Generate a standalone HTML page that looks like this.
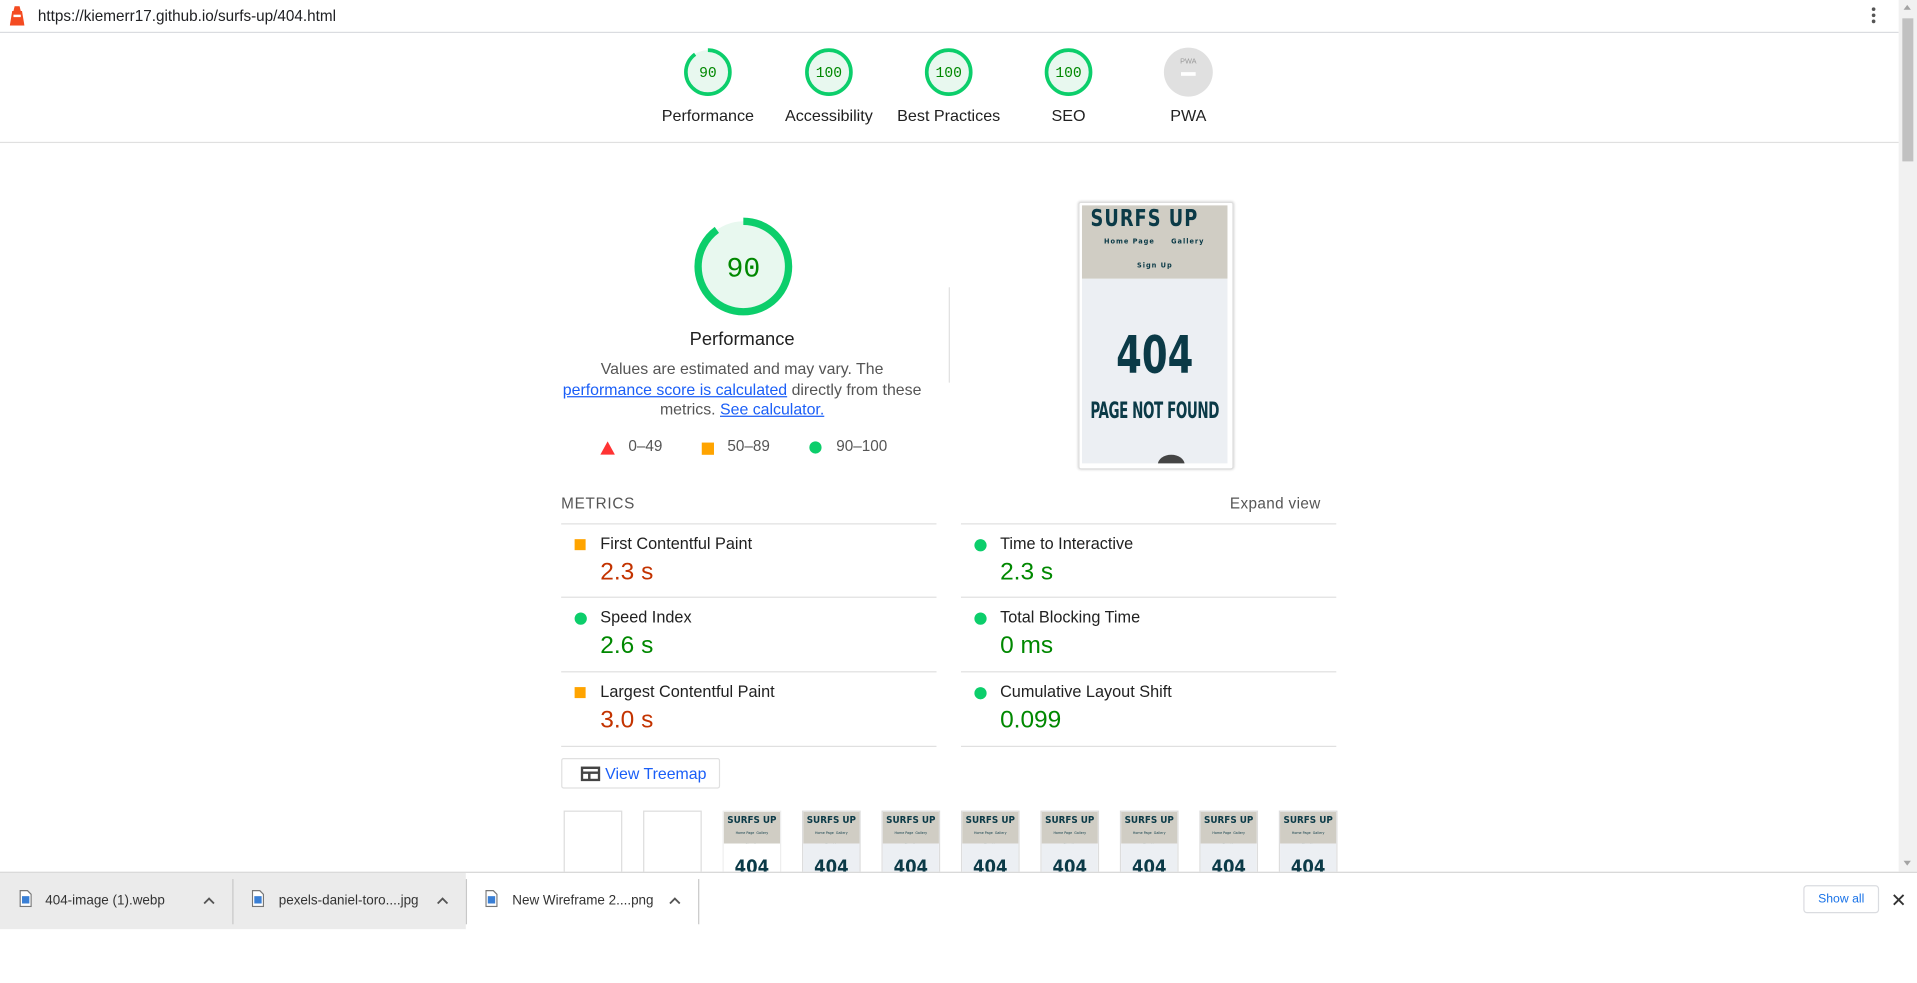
<!DOCTYPE html>
<html><head><meta charset="utf-8">
<style>
html,body{margin:0;padding:0;width:1917px;height:977px;overflow:hidden;background:#fff}
#w{position:absolute;left:0;top:0;width:1568px;height:800px;transform:scale(1.22258);transform-origin:0 0;font-family:"Liberation Sans",Arial,sans-serif;color:#212121}
.a{position:absolute}
.c{text-align:center;white-space:nowrap}
.lbl{position:absolute;font-size:13.2px;width:120px;text-align:center;top:87px;white-space:nowrap}
.row{position:absolute;height:60px;border-top:1px solid #e0e0e0}
.t{position:absolute;left:32px;top:8px;font-size:13.3px;color:#212121;white-space:nowrap}
.v{position:absolute;left:32px;top:28px;font-size:20px}
.sq{position:absolute;left:11px;top:12px;width:9px;height:9px;background:#ffa400}
.dt{position:absolute;left:11px;top:12px;width:10px;height:10px;border-radius:50%;background:#0cce6b}
.fr{position:absolute;top:663px;width:46px;height:60px;border:1px solid #ddd;background:#fff;overflow:hidden}
.fh{height:26px;background:#d0cdc4;color:#0b3a47;font-weight:bold;font-size:8px;text-align:center;line-height:9px;font-family:"DejaVu Sans Condensed","Liberation Sans Narrow",sans-serif;white-space:nowrap;overflow:hidden;padding-top:2px;box-sizing:border-box}
.fh span{font-size:3px;font-weight:normal;line-height:7px}
.fb{background:#eceff3;height:40px;color:#0b3a47;font-weight:bold;font-size:15px;text-align:center;padding-top:10px;box-sizing:border-box;font-family:"DejaVu Sans Condensed",sans-serif}
</style></head><body><div id="w">
<svg class="a" style="left:8px;top:5px" width="12" height="16" viewBox="0 0 12 16"><path d="M4 0h4l1 4h1l2 12H0L2 4h1z" fill="#f44b21"/><rect x="3" y="7" width="6" height="2" fill="#fff"/></svg>
<div class="a" style="left:31px;top:6px;font-size:12.5px;color:#202124">https://kiemerr17.github.io/surfs-up/404.html</div>
<div class="a" style="left:1531px;top:6px;width:3px;height:3px;border-radius:50%;background:#555;box-shadow:0 5px 0 #555,0 10px 0 #555"></div>
<div class="a" style="left:0;top:26px;width:1553px;height:1px;background:#dadce0"></div>
<div class="a" style="left:1553px;top:0;width:15px;height:713px;background:#f1f1f1"></div>
<div class="a" style="left:1556px;top:15px;width:9px;height:117px;background:#c1c1c1"></div>
<div class="a" style="left:1557px;top:4px;width:0;height:0;border:3.5px solid transparent;border-bottom:4px solid #a3a3a3;border-top:0"></div>
<div class="a" style="left:1557px;top:704px;width:0;height:0;border:3.5px solid transparent;border-top:4px solid #a3a3a3;border-bottom:0"></div>
<svg class="a" style="left:558px;top:38px" width="42" height="42"><circle cx="21" cy="21" r="18" fill="#e8f8ef" stroke="#0cce6b" stroke-width="3" stroke-dasharray="101.8 113.1" transform="rotate(-90 21 21)"/><text x="21" y="25" text-anchor="middle" font-family="Liberation Mono,monospace" font-size="12" fill="#008800">90</text></svg>
<svg class="a" style="left:657px;top:38px" width="42" height="42"><circle cx="21" cy="21" r="18" fill="#e8f8ef" stroke="#0cce6b" stroke-width="3"/><text x="21" y="25" text-anchor="middle" font-family="Liberation Mono,monospace" font-size="12" fill="#008800">100</text></svg>
<svg class="a" style="left:755px;top:38px" width="42" height="42"><circle cx="21" cy="21" r="18" fill="#e8f8ef" stroke="#0cce6b" stroke-width="3"/><text x="21" y="25" text-anchor="middle" font-family="Liberation Mono,monospace" font-size="12" fill="#008800">100</text></svg>
<svg class="a" style="left:853px;top:38px" width="42" height="42"><circle cx="21" cy="21" r="18" fill="#e8f8ef" stroke="#0cce6b" stroke-width="3"/><text x="21" y="25" text-anchor="middle" font-family="Liberation Mono,monospace" font-size="12" fill="#008800">100</text></svg>
<svg class="a" style="left:951px;top:38px" width="42" height="42"><circle cx="21" cy="21" r="20" fill="#e0e0e0"/><text x="21" y="14" text-anchor="middle" font-size="6" fill="#999" font-family="Liberation Sans">PWA</text><rect x="15" y="21" width="12" height="3" fill="#fff"/></svg>
<div class="lbl" style="left:519px">Performance</div>
<div class="lbl" style="left:618px">Accessibility</div>
<div class="lbl" style="left:716px">Best Practices</div>
<div class="lbl" style="left:814px">SEO</div>
<div class="lbl" style="left:912px">PWA</div>
<div class="a" style="left:0;top:116px;width:1553px;height:1px;background:#e0e0e0"></div>
<svg class="a" style="left:566px;top:176px" width="84" height="84"><circle cx="42" cy="42" r="37" fill="#e8f8ef" stroke="#0cce6b" stroke-width="6" stroke-dasharray="209 232.5" transform="rotate(-90 42 42)"/><text x="42" y="50" text-anchor="middle" font-family="Liberation Mono,monospace" font-size="23" fill="#008800">90</text></svg>
<div class="a c" style="left:507px;top:269px;width:200px;font-size:15px">Performance</div>
<div class="a" style="left:407px;top:294px;width:400px;font-size:13px;line-height:16.5px;color:#555;text-align:center;white-space:nowrap">Values are estimated and may vary. The<br><span style="color:#1a5ef7;text-decoration:underline">performance score is calculated</span> directly from these<br>metrics. <span style="color:#1a5ef7;text-decoration:underline">See calculator.</span></div>
<svg class="a" style="left:491px;top:361px" width="12" height="11"><path d="M6 0L12 11H0z" fill="#f33"/></svg>
<div class="a" style="left:514px;top:358px;font-size:12.5px;color:#555">0–49</div>
<div class="a" style="left:574px;top:362px;width:10px;height:10px;background:#ffa400"></div>
<div class="a" style="left:595px;top:358px;font-size:12.5px;color:#555">50–89</div>
<div class="a" style="left:662px;top:361px;width:10px;height:10px;border-radius:50%;background:#0cce6b"></div>
<div class="a" style="left:684px;top:358px;font-size:12.5px;color:#555">90–100</div>
<div class="a" style="left:776px;top:235px;width:1px;height:78px;background:#e0e0e0"></div>
<div class="a" style="left:882px;top:165px;width:125px;height:217px;border:1px solid #ddd;border-radius:2px;box-shadow:0 0 2px #ccc"></div>
<div class="a" style="left:885px;top:168px;width:119px;height:60px;background:#d0cdc4;color:#0b3a47;font-family:'DejaVu Sans Condensed',sans-serif;white-space:nowrap;overflow:hidden">
<div class="a" style="left:7px;top:0px;font-size:19px;font-weight:bold;letter-spacing:1px;transform:scaleX(.85);transform-origin:0 0">SURFS UP</div>
<div class="a" style="left:18px;top:26px;font-size:6px;font-weight:bold;letter-spacing:.8px">Home Page&nbsp;&nbsp;&nbsp;&nbsp;&nbsp;Gallery</div>
<div class="a" style="left:45px;top:46px;font-size:6px;font-weight:bold;letter-spacing:.8px">Sign Up</div></div>
<div class="a" style="left:885px;top:228px;width:119px;height:151px;background:#eceff3;color:#0b3a47;font-family:'DejaVu Sans Condensed',sans-serif;text-align:center;overflow:hidden;white-space:nowrap">
<div class="a" style="left:-50px;width:219px;top:38px;font-size:42px;font-weight:bold;transform:scaleX(.8)">404</div>
<div class="a" style="left:-50px;width:219px;top:98px;font-size:18px;font-weight:bold;letter-spacing:-0.5px;transform:scaleX(.68)">PAGE NOT FOUND</div>
<div class="a" style="left:62px;top:144px;width:22px;height:16px;border-radius:50%;background:#444"></div></div>
<div class="a" style="left:459px;top:405px;font-size:12.5px;color:#555;letter-spacing:.6px">METRICS</div>
<div class="a" style="left:1006px;top:405px;font-size:12.5px;color:#555;letter-spacing:.3px">Expand view</div>
<div class="row" style="left:459px;top:428px;width:307px"><div class="sq"></div><div class="t">First Contentful Paint</div><div class="v" style="color:#c33300">2.3 s</div></div>
<div class="row" style="left:459px;top:488px;width:307px"><div class="dt"></div><div class="t">Speed Index</div><div class="v" style="color:#080">2.6 s</div></div>
<div class="row" style="left:459px;top:549px;width:307px;border-bottom:1px solid #e0e0e0"><div class="sq"></div><div class="t">Largest Contentful Paint</div><div class="v" style="color:#c33300">3.0 s</div></div>
<div class="row" style="left:786px;top:428px;width:307px"><div class="dt"></div><div class="t">Time to Interactive</div><div class="v" style="color:#080">2.3 s</div></div>
<div class="row" style="left:786px;top:488px;width:307px"><div class="dt"></div><div class="t">Total Blocking Time</div><div class="v" style="color:#080">0 ms</div></div>
<div class="row" style="left:786px;top:549px;width:307px;border-bottom:1px solid #e0e0e0"><div class="dt"></div><div class="t">Cumulative Layout Shift</div><div class="v" style="color:#080">0.099</div></div>
<div class="a" style="left:459px;top:620px;width:130px;height:25px;border:1px solid #e0e0e0;border-radius:2px;box-sizing:border-box"></div>
<svg class="a" style="left:475px;top:627px" width="16" height="12"><rect x="1" y="1" width="14" height="10" fill="none" stroke="#444" stroke-width="2"/><path d="M1 5h14M7 5v6" stroke="#444" stroke-width="2"/></svg>
<div class="a" style="left:495px;top:625px;font-size:13px;color:#1a5ef7">View Treemap</div>
<div class="fr" style="left:461px"></div>
<div class="fr" style="left:526px"></div>
<div class="fr" style="left:591px;border-color:#eee"><div class="fh">SURFS UP<br><span>Home Page&nbsp;&nbsp;Gallery</span><br><span>Sign Up</span></div><div class="fb" style="background:#fff">404</div></div>
<div class="fr" style="left:656px"><div class="fh">SURFS UP<br><span>Home Page&nbsp;&nbsp;Gallery</span><br><span>Sign Up</span></div><div class="fb">404</div></div>
<div class="fr" style="left:721px"><div class="fh">SURFS UP<br><span>Home Page&nbsp;&nbsp;Gallery</span><br><span>Sign Up</span></div><div class="fb">404</div></div>
<div class="fr" style="left:786px"><div class="fh">SURFS UP<br><span>Home Page&nbsp;&nbsp;Gallery</span><br><span>Sign Up</span></div><div class="fb">404</div></div>
<div class="fr" style="left:851px"><div class="fh">SURFS UP<br><span>Home Page&nbsp;&nbsp;Gallery</span><br><span>Sign Up</span></div><div class="fb">404</div></div>
<div class="fr" style="left:916px"><div class="fh">SURFS UP<br><span>Home Page&nbsp;&nbsp;Gallery</span><br><span>Sign Up</span></div><div class="fb">404</div></div>
<div class="fr" style="left:981px"><div class="fh">SURFS UP<br><span>Home Page&nbsp;&nbsp;Gallery</span><br><span>Sign Up</span></div><div class="fb">404</div></div>
<div class="fr" style="left:1046px"><div class="fh">SURFS UP<br><span>Home Page&nbsp;&nbsp;Gallery</span><br><span>Sign Up</span></div><div class="fb">404</div></div>
<div class="a" style="left:0;top:713px;width:1568px;height:90px;background:#fff;border-top:1px solid #d6d6d6"></div>
<div class="a" style="left:0;top:714px;width:381px;height:46px;background:#ebebeb"></div>
<div class="a" style="left:190px;top:719px;width:1px;height:37px;background:#c8c8c8"></div>
<div class="a" style="left:381px;top:719px;width:1px;height:37px;background:#c8c8c8"></div>
<div class="a" style="left:571px;top:719px;width:1px;height:37px;background:#c8c8c8"></div>
<svg class="a" style="left:16px;top:728px" width="10" height="14"><path d="M.5.5h6l3 3v10H.5z" fill="#fff" stroke="#777"/><rect x="2" y="5" width="6" height="6" fill="#3a7fd5"/></svg>
<svg class="a" style="left:206px;top:728px" width="10" height="14"><path d="M.5.5h6l3 3v10H.5z" fill="#fff" stroke="#777"/><rect x="2" y="5" width="6" height="6" fill="#3a7fd5"/></svg>
<svg class="a" style="left:397px;top:728px" width="10" height="14"><path d="M.5.5h6l3 3v10H.5z" fill="#fff" stroke="#777"/><rect x="2" y="5" width="6" height="6" fill="#3a7fd5"/></svg>
<div class="a" style="left:37px;top:731px;font-size:11px;color:#333">404-image (1).webp</div>
<div class="a" style="left:228px;top:731px;font-size:11px;color:#333">pexels-daniel-toro....jpg</div>
<div class="a" style="left:419px;top:731px;font-size:11px;color:#333">New Wireframe 2....png</div>
<svg class="a" style="left:166px;top:733px" width="10" height="7"><path d="M1 6l4-4 4 4" fill="none" stroke="#555" stroke-width="1.5"/></svg>
<svg class="a" style="left:357px;top:733px" width="10" height="7"><path d="M1 6l4-4 4 4" fill="none" stroke="#555" stroke-width="1.5"/></svg>
<svg class="a" style="left:547px;top:733px" width="10" height="7"><path d="M1 6l4-4 4 4" fill="none" stroke="#555" stroke-width="1.5"/></svg>
<div class="a" style="left:1475px;top:724px;width:62px;height:23px;border:1px solid #dadce0;border-radius:3px;box-sizing:border-box;font-size:10px;color:#1a73e8;text-align:center;line-height:21px">Show all</div>
<svg class="a" style="left:1548px;top:731px" width="10" height="10"><path d="M1 1l8 8M9 1l-8 8" stroke="#333" stroke-width="1.5"/></svg>
</div></body></html>
